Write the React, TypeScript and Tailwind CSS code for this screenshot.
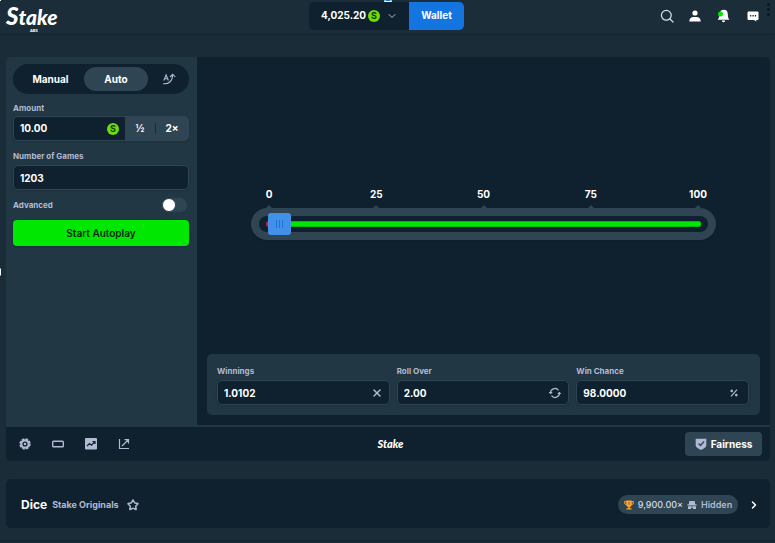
// src/App.tsx
import React from 'react'
import { ChevronDown, ChevronRight, Star, X } from 'lucide-react'

const scaleMarks = [0, 25, 50, 75, 100]

function Logo({ small = false }: { small?: boolean }) {
  if (small) {
    return (
      <a href="#home" className="font-[Lato] text-[11px] font-black italic leading-4 text-white">
        Stake
      </a>
    )
  }

  return (
    <a href="#home" className="relative font-[Lato] text-[21px] font-black italic leading-6 text-white">
      <span className="text-[24px]">S</span>take
      <span className="absolute -bottom-1 left-6 text-[4px] leading-none not-italic">ABS</span>
    </a>
  )
}

function Coin() {
  return (
    <span className="flex size-3 shrink-0 items-center justify-center rounded-full bg-[#6cde07] text-[9px] font-bold leading-none text-[#1b3802]">
      S
    </span>
  )
}

interface FieldProps {
  id: string
  label: string
  value: string
  icon?: React.ReactNode
}

function Field({ id, label, value, icon }: FieldProps) {
  return (
    <div className="min-w-0 flex-1">
      <label htmlFor={id} className="block text-[8px] font-bold leading-3 text-[#b1bad3]">
        {label}
      </label>
      <div className="mt-[3px] flex h-[25px] items-center rounded-[5px] border border-[#2f4553] bg-[#0f212e] px-1.5 pt-px shadow-sm">
        <input
          id={id}
          defaultValue={value}
          className="w-full min-w-0 bg-transparent text-[10px] font-bold text-white outline-none"
        />
        <span className="text-[#b1bad3]">{icon}</span>
      </div>
    </div>
  )
}

function Header() {
  return (
    <header className="grid h-[34px] grid-cols-[1fr_auto_1fr] items-center border-b border-[#182733] bg-[#1c2d3a] pl-1.5 pr-2 shadow-sm">
      <div className="flex items-center">
        <Logo />
      </div>
      <div className="mb-0.5 flex h-7 overflow-hidden rounded-[5px] text-[10px] font-bold text-white">
        <button className="flex w-[100px] items-center bg-[#0f212e] pl-3">
          4,025.20
          <span className="ml-0.5">
            <Coin />
          </span>
          <ChevronDown className="ml-1.5 size-3 text-[#b1bad3]" />
        </button>
        <button className="w-[55px] bg-[#1475e1]">Wallet</button>
      </div>
      <div className="mb-0.5 flex items-center justify-end gap-[15px] pr-2 text-white">
        <button aria-label="Search">
          <svg viewBox="0 0 14 14" className="size-3.5" fill="none" stroke="#d5dceb" strokeWidth="1.3">
            <circle cx="6.3" cy="6.3" r="4.9" />
            <path d="M10 10l3 3" strokeLinecap="round" />
          </svg>
        </button>
        <button aria-label="Account">
          <svg viewBox="0 0 12 12" className="size-3" fill="currentColor">
            <circle cx="6" cy="3" r="2.6" />
            <path d="M.3 11.5c0-3 1.7-4.6 4-4.6h3.4c2.3 0 4 1.6 4 4.600z" />
          </svg>
        </button>
        <button aria-label="Notifications">
          <svg viewBox="0 0 14 14" className="size-3.5" fill="currentColor">
            <path d="M8 .8c2.800 0 3.800 2 3.800 4.400 0 2.800.5 4 1.600 5.600H1.600C2.800 9.200 3.500 8 3.500 5.200 3.500 2.800 5 .8 8 .8z" />
            <path d="M5.800 11.600h3.400a1.700 1.700 0 0 1-3.400 0z" />
            <circle cx="4.500" cy="5" r="2.500" fill="#00e701" />
          </svg>
        </button>
        <button aria-label="Chat" className="ml-0.5">
          <svg viewBox="0 0 12 12" className="size-3" fill="currentColor">
            <path d="M1.500 1.500h9a1 1 0 0 1 1 1V9a1 1 0 0 1-1 1H9.300v1.500L7 10H1.500a1 1 0 0 1-1-1V2.500a1 1 0 0 1 1-1z" />
            <path d="M3 5h1.300v1.400H3zM5.400 5h1.300v1.400H5.400zM7.800 5h1.300v1.400H7.800z" fill="#1c2d3a" />
          </svg>
        </button>
      </div>
    </header>
  )
}

function BetPanel() {
  return (
    <aside className="w-[191px] shrink-0 bg-[#213743] pl-[7px] pr-2 pt-[7px]">
      <div className="flex h-[30px] items-center rounded-full bg-[#0f212e] px-1 text-[10px] font-bold text-white">
        <button className="h-6 w-[67px]">Manual</button>
        <button className="h-6 w-16 rounded-full bg-[#2f4553]">Auto</button>
        <button aria-label="Advanced betting" className="flex h-6 flex-1 items-center justify-center pl-1">
          <svg viewBox="0 0 14 12" className="h-3 w-3.5" fill="none" stroke="#b1bad3" strokeWidth="1.1">
            <path d="M1.800 7.500L4.100 2l2.300 5.500M2.700 5.700h2.800" />
            <path d="M1.200 10.600c5.300.6 9.300-2 9.500-8.800M8 4l2.700-2.800L13.300 4" />
          </svg>
        </button>
      </div>

      <label htmlFor="amount" className="mt-2 block text-[8px] font-bold leading-3 text-[#b1bad3]">
        Amount
      </label>
      <div className="mt-0.5 flex h-[25px] rounded-[5px] border border-[#2f4553] bg-[#2f4553] text-[10px] font-bold text-white shadow-sm">
        <div className="flex min-w-0 flex-1 items-center rounded-l-[4px] bg-[#0f212e] px-1.5">
          <input
            id="amount"
            defaultValue="10.00"
            className="w-full min-w-0 bg-transparent font-bold outline-none"
          />
          <Coin />
        </div>
        <button className="w-[30px]">½</button>
        <span className="my-1.5 w-px bg-[#1a2c38]" />
        <button className="w-8">2×</button>
      </div>

      <div className="mt-[9px] flex">
        <Field id="games" label="Number of Games" value="1203" />
      </div>

      <div className="mt-2 flex items-center justify-between pr-0.5">
        <label htmlFor="advanced" className="text-[8px] font-bold leading-3 text-[#b1bad3]">
          Advanced
        </label>
        <input
          id="advanced"
          type="checkbox"
          role="switch"
          className="h-3.5 w-[25px] appearance-none rounded-full bg-[#2f4553] before:block before:size-3.5 before:rounded-full before:border before:border-[#2f4553] before:bg-white checked:before:ml-auto"
        />
      </div>

      <button className="mt-2 h-[26px] w-full rounded-[4px] bg-[#00e701] text-[10px] font-semibold text-[#05270c] shadow-sm">
        Start Autoplay
      </button>
    </aside>
  )
}

function DiceSlider() {
  return (
    <div className="px-[54px] pt-[131px]">
      <div className="flex justify-between px-1 text-[10px] font-bold leading-3 text-white">
        {scaleMarks.map(mark => (
          <div key={mark} className="flex w-7 flex-col items-center">
            <span>{mark}</span>
            <svg viewBox="0 0 6 3" className="mt-[5px] h-[3px] w-1.5" fill="#2f4553">
              <path d="M0 3l3-3 3 3z" />
            </svg>
          </div>
        ))}
      </div>
      <div className="rounded-full bg-[#2f4553] p-2 shadow-sm">
        <div className="grid h-4 grid-rows-[16px] items-center rounded-full bg-[#0f212e]">
          <div className="col-start-1 row-start-1 mx-[7px] flex h-1.5 overflow-hidden rounded-full">
            <span className="w-[2%] bg-[#e9113c]" />
            <span className="flex-1 border-y border-[#04b80c] bg-[#00e701]" />
          </div>
          <input
            type="range"
            aria-label="Roll over"
            min={0}
            max={100}
            defaultValue={2}
            className="z-10 col-start-1 row-start-1 -my-[3px] h-[22px] w-full appearance-none bg-transparent [&::-webkit-slider-thumb]:h-[22px] [&::-webkit-slider-thumb]:w-[23px] [&::-webkit-slider-thumb]:appearance-none [&::-webkit-slider-thumb]:rounded-[3px] [&::-webkit-slider-thumb]:bg-[#4391e7] [&::-webkit-slider-thumb]:bg-[repeating-linear-gradient(90deg,#1475e1_0_1px,transparent_1px_3px)] [&::-webkit-slider-thumb]:bg-[length:7px_8px] [&::-webkit-slider-thumb]:bg-center [&::-webkit-slider-thumb]:bg-no-repeat"
          />
        </div>
      </div>
    </div>
  )
}

function Stage() {
  return (
    <section className="flex min-w-0 flex-1 flex-col justify-between bg-[#0f212e]">
      <DiceSlider />
      <div className="mx-2.5 mb-2.5 flex gap-[7px] rounded-[5px] bg-[#213743] pb-2.5 pl-2.5 pr-[11px] pt-[11px]">
        <Field
          id="winnings"
          label="Winnings"
          value="1.0102"
          icon={<X className="size-3" strokeWidth={3} />}
        />
        <Field
          id="roll"
          label="Roll Over"
          value="2.00"
          icon={
            <svg viewBox="0 0 14 12" className="h-3 w-3.5" fill="none" stroke="currentColor" strokeWidth="1.200">
              <path d="M2.600 6.500A4.400 4.400 0 0 1 10.500 3.300M11.400 5.500A4.400 4.400 0 0 1 3.500 8.700" />
              <path d="M.6 5l2 2.300L4.800 5zM13.400 7l-2-2.300L9.200 7z" fill="currentColor" stroke="none" />
            </svg>
          }
        />
        <Field
          id="chance"
          label="Win Chance"
          value="98.0000"
          icon={
            <svg viewBox="0 0 8 8" className="mr-1 size-2" fill="none" stroke="currentColor" strokeWidth="1.200">
              <path d="M1 7.300l6-6.600" />
              <circle cx="1.700" cy="1.900" r=".7" />
              <circle cx="6.300" cy="6.100" r=".7" />
            </svg>
          }
        />
      </div>
    </section>
  )
}

function Toolbar() {
  return (
    <footer className="grid h-9 grid-cols-[1fr_auto_1fr] items-center border-t-2 border-[#213743] bg-[#0f212e] pl-[13px] pr-2">
      <div className="flex items-center gap-[21px] text-[#b1bad3]">
        <button aria-label="Settings">
          <svg viewBox="0 0 12 12" className="size-3" fill="none" stroke="currentColor">
            <circle cx="6" cy="6" r="3.700" strokeWidth="2.200" />
            <circle cx="6" cy="6" r="5" strokeWidth="1.400" strokeDasharray="2.600 1.327" />
            <circle cx="6" cy="6" r="1.300" fill="currentColor" stroke="none" />
          </svg>
        </button>
        <button aria-label="Theatre mode">
          <svg viewBox="0 0 12 12" className="size-3" fill="none" stroke="currentColor" strokeWidth="1.400">
            <rect x=".7" y="3.200" width="10.600" height="5.600" rx=".8" />
          </svg>
        </button>
        <button aria-label="Live stats">
          <svg viewBox="0 0 12 12" className="size-3">
            <rect width="12" height="11.500" rx="1" fill="currentColor" />
            <path d="M2 8l2.500-2.500 2 1.700L10 3.500M7.500 3.500H10V6" fill="none" stroke="#0f212e" strokeWidth="1.200" />
          </svg>
        </button>
        <button aria-label="Open in new window">
          <svg viewBox="0 0 12 12" className="size-3" fill="none" stroke="currentColor" strokeWidth="1.200">
            <path d="M1.500 1v9.500H11M4 8l6-6M6.500 1.700h4V5.500" />
          </svg>
        </button>
      </div>
      <Logo small />
      <button className="flex h-6 w-[77px] items-center justify-center gap-1 justify-self-end rounded-[4px] bg-[#2f4553] text-[10px] font-bold text-white">
        <svg viewBox="0 0 12 12" className="size-3">
          <path d="M.7.8h10.600v6.500C11.300 9.300 8.500 11 6 12 3.500 11 .7 9.300.7 7.300z" fill="#b1bad3" />
          <path d="M3.500 5.500l2 2 3.500-4" fill="none" stroke="#2f4553" strokeWidth="1.300" />
        </svg>
        Fairness
      </button>
    </footer>
  )
}

function GameInfo() {
  return (
    <section className="mt-[18px] flex h-[49px] items-center rounded-[5px] bg-[#0f212e] pl-[15px] pr-2.5 pt-0.5">
      <h1 className="text-[12px] font-bold text-white">Dice</h1>
      <a href="#originals" className="ml-[5px] text-[9px] font-bold text-[#b1bad3]">
        Stake Originals
      </a>
      <button aria-label="Add to favourites" className="ml-2 text-[#b1bad3]">
        <Star className="size-3" strokeWidth={3} />
      </button>
      <div className="ml-auto flex h-[19px] w-[120px] items-center justify-center rounded-full bg-[#2f4553] text-[9px] font-medium text-[#d5dceb]">
        <svg viewBox="0 0 10 10" className="mr-1 size-2.5" fill="#ffa72a">
          <path d="M2.200.5h5.600v3.800c0 1.500-1 2.500-2.100 2.700v1.300h1.800v1.300h-5V8.300h1.800V7C3.200 6.800 2.200 5.800 2.200 4.300z" />
          <path d="M2.200 1.600H.6c0 2.200.6 3.100 2 3.300M7.800 1.600h1.600c0 2.200-.6 3.100-2 3.300" fill="none" stroke="#ffa72a" />
          <path d="M4.600 2h.8v2.800h-.8z" fill="#704714" />
        </svg>
        9,900.00×
        <svg viewBox="0 0 10 10" className="ml-1 mr-1 size-2.5" fill="#b1bad3">
          <path d="M2.300 1h5.400l.5 3.200H9.600v1.200H.4V4.200h1.400z" />
          <path d="M1 6.200h3.500v.6h1v-.6H9V9H6V7.700H4V9H1z" />
        </svg>
        <span className="font-semibold text-[#b1bad3]">Hidden</span>
      </div>
      <button aria-label="Show details" className="ml-2.5 text-white">
        <ChevronRight className="size-3" strokeWidth={3} />
      </button>
    </section>
  )
}

export default function App() {
  return (
    <div className="relative min-h-screen bg-[#1a2c38] font-[Inter,'Open_Sans',sans-serif]">
      <Header />
      <main className="pb-3 pl-1.5 pr-[5px] pt-[23px]">
        <div className="overflow-hidden rounded-[5px]">
          <div className="flex min-h-[368px]">
            <BetPanel />
            <Stage />
          </div>
          <Toolbar />
        </div>
        <GameInfo />
      </main>
      <div className="h-0.5 bg-[#162632]" />

      {/* selection handles and overflow menu on top of the page */}
      <span className="absolute left-0 top-0 size-px bg-white" />
      <span className="absolute left-1/2 top-0 h-0.5 w-[7px] -translate-x-1/2 border border-t-0 border-white bg-[#1475e1]" />
      <span className="absolute left-0 top-1/2 h-[7px] w-px -translate-y-1/2 bg-white" />
      <button aria-label="More" className="absolute right-[5px] top-[3px] flex flex-col gap-0.5">
        <span className="size-[3px] rounded-full bg-[#0c151c]" />
        <span className="size-[3px] rounded-full bg-[#0c151c]" />
        <span className="size-[3px] rounded-full bg-[#0c151c]" />
      </button>
    </div>
  )
}
